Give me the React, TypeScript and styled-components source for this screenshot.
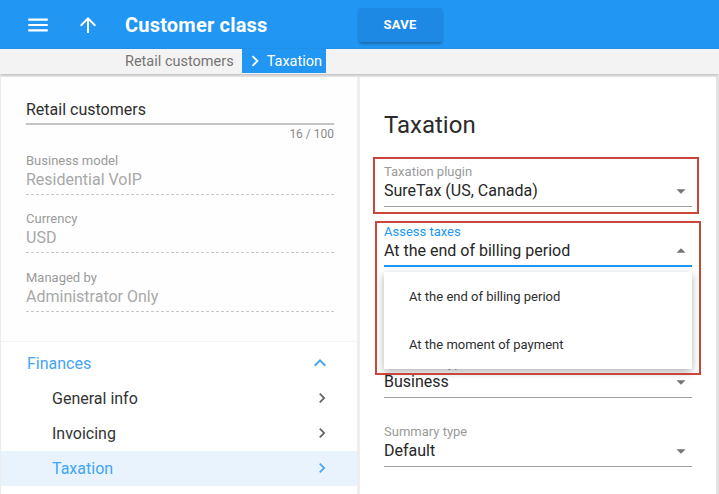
import * as React from 'react';
import styled, {createGlobalStyle} from 'styled-components';
import {
  MdMenu,
  MdArrowUpward,
  MdChevronRight,
  MdKeyboardArrowUp,
  MdArrowDropDown,
  MdArrowDropUp,
} from 'react-icons/md';

const GlobalStyle = createGlobalStyle`
  html, body {
    margin: 0;
    padding: 0;
    background: #eeeeee;
    font-family: Roboto, "Noto Sans", Arial, sans-serif;
    overflow: hidden;
  }
  * { box-sizing: border-box; }
`;

const Page = styled.div`
  width: 719px;
  height: 494px;
  display: flex;
  flex-direction: column;
  background: #eeeeee;
`;

const Header = styled.header`
  height: 49px;
  background: #2196f3;
  display: flex;
  align-items: center;
  color: #fff;
  flex-shrink: 0;
`;

const IconButton = styled.span<{ $ml: number }>`
  display: flex;
  align-items: center;
  margin-left: ${p => p.$ml}px;
  color: #fff;
`;

const Title = styled.h1`
  margin: 0 0 0 25px;
  font-size: 20px;
  font-weight: 700;
  letter-spacing: 0.2px;
  color: #fff;
`;

const SaveButton = styled.button`
  margin-left: 91px;
  width: 83px;
  height: 34px;
  border: none;
  border-radius: 2px;
  background: #1e88e5;
  color: #fff;
  font-family: Roboto, Arial, sans-serif;
  font-weight: 700;
  font-size: 13px;
  letter-spacing: 0.3px;
  box-shadow: 0 2px 3px rgba(0, 0, 0, 0.28);
`;

const Breadcrumbs = styled.nav`
  height: 25px;
  background: #f3f3f3;
  display: flex;
  align-items: stretch;
  padding-left: 125px;
  box-shadow: 0 1px 3px rgba(0, 0, 0, 0.25);
  position: relative;
  z-index: 2;
  flex-shrink: 0;
`;

const Crumb = styled.span`
  font-size: 14.5px;
  color: #757575;
  display: flex;
  align-items: center;
  margin-right: 8px;
`;

const ActiveCrumb = styled.span`
  background: #2196f3;
  color: #fff;
  font-size: 14.5px;
  display: flex;
  align-items: center;
  height: 24px;
  padding: 0 4px 0 2px;
  gap: 1px;
`;

const Content = styled.div`
  flex: 1;
  display: flex;
  margin-top: 3px;
  min-height: 0;
`;

const LeftPanel = styled.aside`
  width: 357px;
  margin-right: 3px;
  display: flex;
  flex-direction: column;
  border-left: 1px solid #ececec;
  background: #fdfdfd;
`;

const Card = styled.section<{ $pt: number }>`
  background: #fff;
  padding: ${p => p.$pt}px 23px 0 25px;
`;

const InfoCard = styled(Card)`
  height: 265px;
  background: #fefefe;
  border-bottom: 1px solid #f3f3f3;
`;

const NavCard = styled(Card)`
  flex: 1;
  padding-left: 0;
  padding-right: 0;
`;

const NameInput = styled.div`
  font-size: 16px;
  line-height: 22px;
  color: #2e2e2e;
  padding: 1px 0 2px;
  border-bottom: 2px solid #c4c4c4;
`;

const Counter = styled.div`
  text-align: right;
  font-size: 12px;
  line-height: 14px;
  color: #8a8a8a;
  margin-top: 2px;
`;

const ReadOnly = styled.div<{ $mt: number }>`
  margin-top: ${p => p.$mt}px;
`;

const SmallLabel = styled.div<{ $color?: string }>`
  font-size: 13px;
  line-height: 17px;
  color: ${p => p.$color || '#9a9a9a'};
`;

const ReadOnlyValue = styled.div`
  font-size: 16px;
  line-height: 22px;
  color: #a8a8a8;
  padding-bottom: 3px;
  border-bottom: 1px dashed #c8c8c8;
`;

const NavRow = styled.div<{ $active?: boolean; $indent: number; $color: string }>`
  height: 35px;
  display: flex;
  align-items: center;
  justify-content: space-between;
  padding: 0 25px 0 ${p => p.$indent}px;
  font-size: 16px;
  color: ${p => p.$color};
  background: ${p => (p.$active ? '#e8f3fd' : 'transparent')};
`;

const RightPanel = styled.main`
  flex: 1;
  background: #fff;
  padding: 32px 24px 0 24px;
  display: flex;
  flex-direction: column;
`;

const RightStrip = styled.div`
  width: 3px;
  background: #e2e2e2;
`;

const Heading = styled.h2`
  margin: 0;
  font-size: 24px;
  line-height: 32px;
  font-weight: 400;
  color: #2b2b2b;
`;

const FieldWrap = styled.div<{ $mt: number }>`
  position: relative;
  margin-top: ${p => p.$mt}px;
`;

const SelectValue = styled.div<{ $focused?: boolean }>`
  display: flex;
  align-items: center;
  justify-content: space-between;
  font-size: 16px;
  line-height: 22px;
  color: #262626;
  padding-bottom: ${p => (p.$focused ? 3 : 4)}px;
  border-bottom: ${p => (p.$focused ? '2px solid #2196f3' : '1px solid #9e9e9e')};

  & svg {
    color: #757575;
  }
`;

const Highlight = styled.div<{ $top: number; $left: number; $right: number; $bottom: number }>`
  position: absolute;
  top: ${p => p.$top}px;
  left: ${p => p.$left}px;
  right: ${p => p.$right}px;
  bottom: ${p => p.$bottom}px;
  border: 2px solid #c9473a;
  pointer-events: none;
  z-index: 4;
`;

const Menu = styled.ul`
  position: absolute;
  top: 49.5px;
  left: 0;
  right: 0;
  margin: 0;
  padding: 0;
  list-style: none;
  background: #fff;
  box-shadow: 0 3px 8px rgba(0, 0, 0, 0.3);
  z-index: 3;
`;

const MenuItem = styled.li`
  height: 48.5px;
  display: flex;
  align-items: center;
  padding-left: 25px;
  font-size: 13px;
  color: #2e2e2e;
`;

type SelectProps = {
  label: string;
  value: string;
  mt: number;
  focused?: boolean;
  children?: React.ReactNode;
};

const SelectField: React.FC<SelectProps> = ({label, value, mt, focused, children}) => (
  <FieldWrap $mt={mt}>
    <SmallLabel $color={focused ? '#2196f3' : undefined}>{label}</SmallLabel>
    <SelectValue $focused={focused}>
      <span>{value}</span>
      {focused ? <MdArrowDropUp size={22} /> : <MdArrowDropDown size={22} />}
    </SelectValue>
    {children}
  </FieldWrap>
);

const readOnly = [
  {label: 'Business model', value: 'Residential VoIP', mt: 11},
  {label: 'Currency', value: 'USD', mt: 15},
  {label: 'Managed by', value: 'Administrator Only', mt: 16},
];

const navItems = ['General info', 'Invoicing', 'Taxation'];

export default function App() {
  return (
    <Page>
      <GlobalStyle />
      <Header>
        <IconButton $ml={25}><MdMenu size={26} /></IconButton>
        <IconButton $ml={25}><MdArrowUpward size={24} /></IconButton>
        <Title>Customer class</Title>
        <SaveButton>SAVE</SaveButton>
      </Header>
      <Breadcrumbs>
        <Crumb>Retail customers</Crumb>
        <ActiveCrumb><MdChevronRight size={22} />Taxation</ActiveCrumb>
      </Breadcrumbs>
      <Content>
        <LeftPanel>
          <InfoCard $pt={21}>
            <NameInput>Retail customers</NameInput>
            <Counter>16 / 100</Counter>
            {readOnly.map(f => (
              <ReadOnly key={f.label} $mt={f.mt}>
                <SmallLabel>{f.label}</SmallLabel>
                <ReadOnlyValue>{f.value}</ReadOnlyValue>
              </ReadOnly>
            ))}
          </InfoCard>
          <NavCard $pt={3.5}>
            <NavRow $indent={26} $color="#42a5f5">
              Finances
              <MdKeyboardArrowUp size={24} />
            </NavRow>
            {navItems.map(item => (
              <NavRow
                key={item}
                $indent={51}
                $active={item === 'Taxation'}
                $color={item === 'Taxation' ? '#42a5f5' : '#333'}
              >
                {item}
                <MdChevronRight size={20} color={item === 'Taxation' ? '#42a5f5' : '#616161'} />
              </NavRow>
            ))}
          </NavCard>
        </LeftPanel>
        <RightPanel>
          <Heading>Taxation</Heading>
          <FieldWrap $mt={21.5}>
            <SelectField label="Taxation plugin" value="SureTax (US, Canada)" mt={0} />
            <Highlight $top={-5.5} $left={-11} $right={-7} $bottom={-7.5} />
          </FieldWrap>
          <SelectField label="Assess taxes" value="At the end of billing period" mt={16} focused>
            <Menu>
              <MenuItem>At the end of billing period</MenuItem>
              <MenuItem>At the moment of payment</MenuItem>
            </Menu>
            <Highlight $top={-1.5} $left={-9} $right={-9} $bottom={-108.5} />
          </SelectField>
          <SelectField label="Customer type" value="Business" mt={87.5} />
          <SelectField label="Summary type" value="Default" mt={24.5} />
        </RightPanel>
        <RightStrip />
      </Content>
    </Page>
  );
}
